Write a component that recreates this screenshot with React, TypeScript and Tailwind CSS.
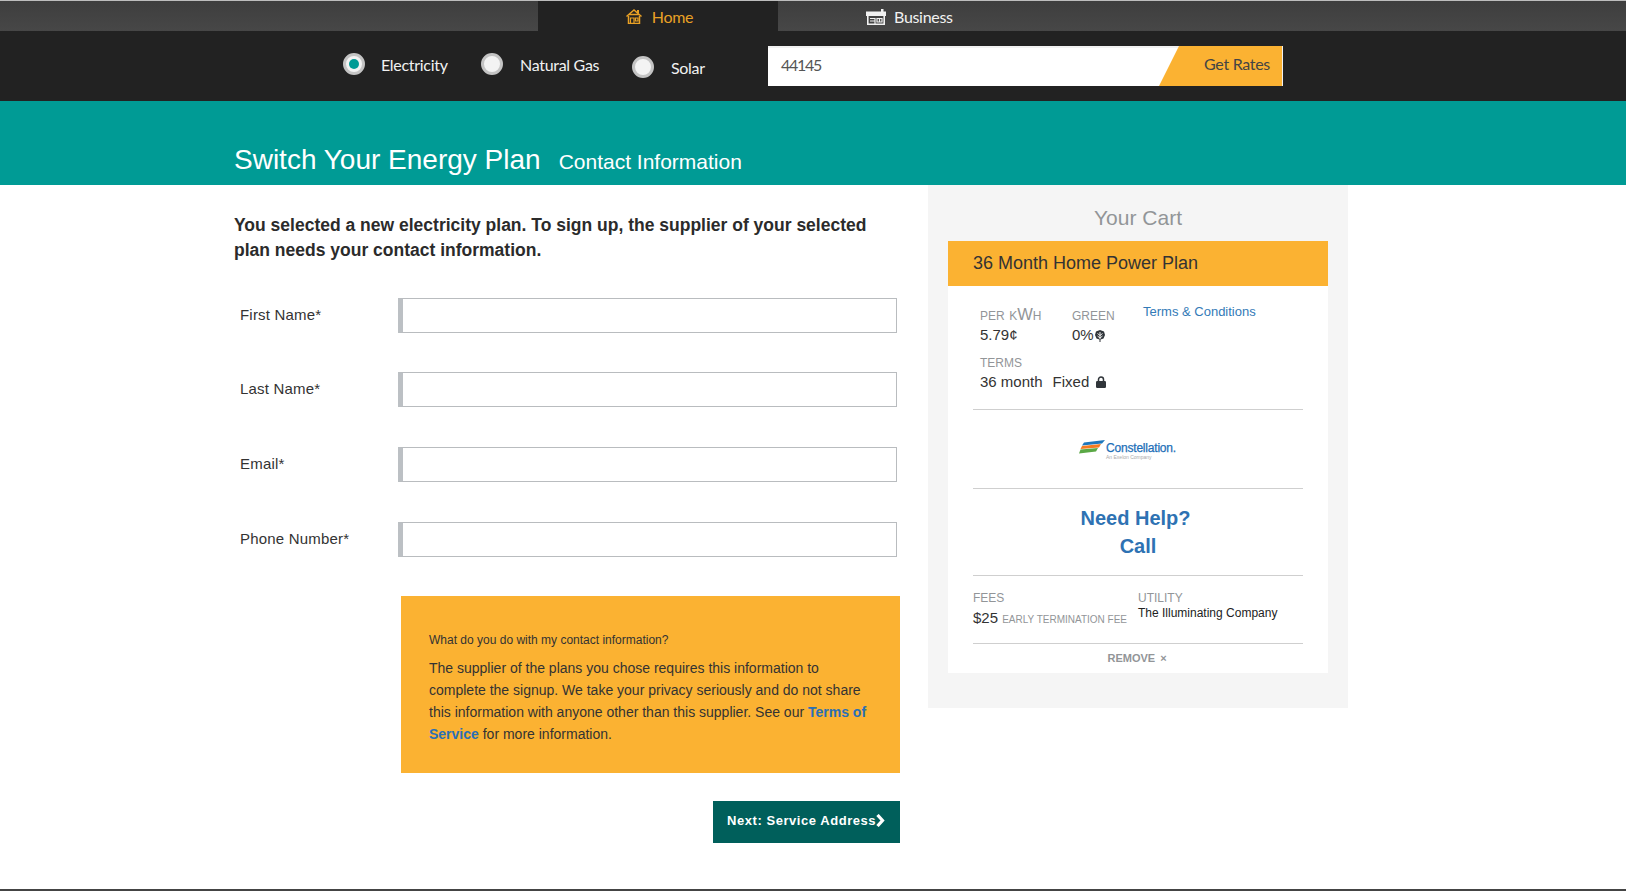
const arial = "font-['Liberation_Sans',Arial,sans-serif]";
const segoe = "font-['Lato','Open_Sans',sans-serif]";
const smallCaps = "text-[16.5px] leading-[18px] text-[#929598] [font-variant:small-caps]";

function HomeIcon() {
  return (
    <svg viewBox="0 0 16 15" className="h-[15px] w-4" fill="none" stroke="#e9a125" strokeWidth="1.5">
      <path d="M.5 7.500 8 1l7.500 6.500" />
      <path d="M3 5.500h10M2.500 7v7.500h11V7" />
      <path d="M12 1v3" strokeWidth="2" />
      <path d="M4.500 9h3.500v5.500H4.500zM9.500 9h2.500v3H9.500z" strokeWidth="1.200" />
    </svg>
  );
}

function StoreIcon() {
  return (
    <svg viewBox="0 0 20 16" className="h-4 w-5" fill="none">
      <path d="M0 2.500h15V0h2.500v2.500H20V7H0z" fill="#f1f1f1" />
      <path d="M1.800 7v8.200h16.400V7" stroke="#f1f1f1" strokeWidth="1.600" />
      <path d="M4 9.500h5v5.500M4 12h5M11 9.500h5v3.500h-5zM13.500 9.500V13" stroke="#f1f1f1" strokeWidth="1.200" />
    </svg>
  );
}

function LeafIcon() {
  return (
    <svg viewBox="0 0 10 12" className="ml-[1px] inline-block h-[12px] w-[10px] align-[-2px]">
      <path d="M5 0 9 1.500 10 5 8.500 8.500 5.500 9.500V12h-1V9.500L1.500 8.500 0 5l1-3.500z" fill="#30353a" />
      <path d="M5 2v7M2.500 3.500 5 5.500 7.500 3.500M2.500 6 5 8 7.500 6" stroke="#fff" strokeWidth=".9" fill="none" />
    </svg>
  );
}

function LockIcon() {
  return (
    <svg viewBox="0 0 10 12" className="ml-[7px] h-[12px] w-[10px]">
      <path d="M2.500 5.500V3.500a2.500 2.500 0 0 1 5 0v2" fill="none" stroke="#30353a" strokeWidth="1.500" />
      <rect x="0" y="5" width="10" height="7" rx="1.200" fill="#30353a" />
    </svg>
  );
}

function Radio({ label, checked, className }: { label: string; checked?: boolean; className: string }) {
  return (
    <div className={`flex items-center ${className}`}>
      <span className="flex h-[22px] w-[22px] items-center justify-center rounded-full border-[3px] border-[#c4c4c4] bg-[#f3f3f3]">
        {checked && <span className="h-[10px] w-[10px] rounded-full bg-[#009b95]" />}
      </span>
      <span className="pt-[2px] text-[16px] tracking-[-.3px] text-[#f1f1f1]">{label}</span>
    </div>
  );
}

function Field({ label, className }: { label: string; className: string }) {
  return (
    <div className={`flex items-center ${className}`}>
      <label className="w-[164px] pl-[6px] text-[15px] tracking-[.2px] text-[#333]">{label}</label>
      <input className="h-[35px] w-[499px] border border-l-[5px] border-[#b9bcbf] border-l-[#bcc0c4] bg-white outline-none" />
    </div>
  );
}

function Divider() {
  return <div className="h-px bg-[#cfcfcf]" />;
}

export default function App() {
  return (
    <div className={`h-[891px] w-full overflow-hidden bg-white ${arial}`}>
      <header className={segoe}>
        <div className="h-[31px] border-t-[1px] border-[#bdbdbd] bg-[linear-gradient(#3e3e3e,#474747)]">
          <div className="ml-[538px] flex h-full">
            <div className="flex h-full w-[240px] items-center justify-center gap-[10px] bg-[#222] pl-[3px] pt-[1px] text-[16px] tracking-[-.3px] text-[#e9a125]">
              <HomeIcon />
              Home
            </div>
            <div className="flex h-full items-center gap-[8px] pl-[88px] pt-[1px] text-[16px] tracking-[-.3px] text-[#f1f1f1]">
              <StoreIcon />
              Business
            </div>
          </div>
        </div>
        <div className="flex h-[70px] bg-[#222] pl-[343px]">
          <Radio label="Electricity" checked className="mt-[22px] h-[22px] w-[138px] gap-[16px]" />
          <Radio label="Natural Gas" className="mt-[22px] h-[22px] w-[151px] gap-[17px]" />
          <Radio label="Solar" className="mt-[25px] h-[22px] w-[136px] gap-[17px]" />
          <div className="mt-[15px] flex h-[40px] w-[515px] border-t-2 border-r border-[#f1f1f1] bg-white">
            <div className="flex-1 pl-[13px] pt-[5px] text-[16px] tracking-[-1.3px] text-[#555]">44145</div>
            <div className="mt-[-2px] flex h-[40px] w-[123px] items-center justify-end bg-[#fbb232] pb-[4px] pr-[12px] text-[16px] tracking-[-.3px] text-[#444] [clip-path:polygon(20px_0,100%_0,100%_100%,0_100%)]">
              Get Rates
            </div>
          </div>
        </div>
      </header>

      <div className="flex h-[84px] items-end bg-[#009b95] pb-[5px] pl-[234px] text-white">
        <h1 className="text-[28px] leading-[40px]">Switch Your Energy Plan</h1>
        <h2 className="ml-[18px] text-[21px] leading-[36px]">Contact Information</h2>
      </div>

      <div className="flex">
        <main className="ml-[234px] w-[694px]">
          <p className="mt-[28px] w-[640px] text-[17.5px] font-bold leading-[25px] text-[#2b2b2b]">
            You selected a new electricity plan. To sign up, the supplier of your selected plan needs your contact information.
          </p>
          <Field label="First Name*" className="mt-[35px]" />
          <Field label="Last Name*" className="mt-[39px]" />
          <Field label="Email*" className="mt-[40px]" />
          <Field label="Phone Number*" className="mt-[40px]" />
          <div className="ml-[167px] mt-[39px] h-[177px] w-[499px] bg-[#fbb232] px-[28px] pt-[36px] text-[#333]">
            <p className="text-[12px] leading-[16px]">What do you do with my contact information?</p>
            <p className="mt-[9px] text-[14px] leading-[22px]">
              The supplier of the plans you chose requires this information to complete the signup. We take your privacy seriously and do not share this information with anyone other than this supplier. See our{" "}
              <a className="font-bold text-[#2a6fb5]">Terms of Service</a> for more information.
            </p>
          </div>
          <div className="ml-[479px] mt-[28px] flex h-[42px] w-[187px] items-center bg-[#005f5b] pb-[3px] pl-[14px] text-[13px] font-bold tracking-[.55px] text-white">
            Next: Service Address
            <svg viewBox="0 0 9 13" className="h-[13px] w-[9px]" fill="none" stroke="#fff" strokeWidth="3.200">
              <path d="M1.500 1l5 5.500-5 5.500" />
            </svg>
          </div>
        </main>

        <aside className="h-[523px] w-[420px] bg-[#f5f5f5] px-[20px]">
          <h3 className="pt-[21px] text-center text-[21px] leading-[23px] text-[#929598]">Your Cart</h3>
          <div className="mt-[12px] flex h-[45px] items-center bg-[#fbb232] pl-[25px] text-[18px] text-[#333]">36 Month Home Power Plan</div>
          <div className="h-[387px] bg-white px-[25px]">
            <div className="relative h-[123px] pl-[7px] pt-[19px]">
              <a className="absolute left-[170px] top-[16px] text-[13px] text-[#337ab7]">Terms &amp; Conditions</a>
              <div className="flex gap-[30px]">
                <div className="w-[62px]">
                  <div className={smallCaps}>per kWh</div>
                  <div className="mt-[2px] text-[15px] leading-[20px] text-[#333]">5.79¢</div>
                </div>
                <div>
                  <div className={smallCaps}>green</div>
                  <div className="mt-[2px] text-[15px] leading-[20px] text-[#333]">0%<LeafIcon /></div>
                </div>
              </div>
              <div className={`mt-[7px] ${smallCaps}`}>terms</div>
              <div className="mt-[2px] flex items-center text-[15px] leading-[20px] text-[#333]">
                36 month
                <span className="ml-[10px]">Fixed</span>
                <LockIcon />
              </div>
            </div>
            <Divider />
            <div className="flex h-[78px] items-center justify-center pb-[4px] pr-[21px]">
              <svg viewBox="0 0 26 14" className="h-[14px] w-[26px]">
                <path d="M5 2.500 26 0l-3 3.500L3 5.500z" fill="#1d76bb" />
                <path d="M3 6l19-2-2 3.500L1.500 9z" fill="#f47b20" />
                <path d="M1.500 9.500 19 8 17 11.500 0 13.500z" fill="#5aa845" />
              </svg>
              <div className="ml-[1px] mt-[8px] flex flex-col">
                <span className="text-[12px] leading-[12px] tracking-[-.2px] text-[#1d6fb8] [-webkit-text-stroke:0.25px_#1d6fb8]">Constellation.</span>
                <span className="text-[5px] leading-[6px] text-[#aaa]">An Exelon Company</span>
              </div>
            </div>
            <Divider />
            <div className="flex h-[86px] flex-col items-center justify-center text-[20px] font-bold leading-[28px] text-[#2e72b3]">
              <span className="pr-[5px]">Need Help?</span>
              <span>Call</span>
            </div>
            <Divider />
            <div className="flex h-[67px] pt-[11px]">
              <div className="w-[165px]">
                <div className={smallCaps}>fees</div>
                <div className="mt-[3px] text-[15px] leading-[20px] text-[#333]">
                  $25 <span className="text-[10px] text-[#929598]">EARLY TERMINATION FEE</span>
                </div>
              </div>
              <div>
                <div className={smallCaps}>utility</div>
                <div className="mt-[1px] text-[12px] leading-[14px] text-[#222]">The Illuminating Company</div>
              </div>
            </div>
            <Divider />
            <div className="flex h-[30px] items-center justify-center pb-[1px] pr-[2px] text-[11px] font-bold text-[#929598]">
              REMOVE
              <span className="ml-[5px] text-[11px]">×</span>
            </div>
          </div>
        </aside>
      </div>
      <div className="mt-[46px] h-[2px] bg-[#444]" />
    </div>
  );
}
